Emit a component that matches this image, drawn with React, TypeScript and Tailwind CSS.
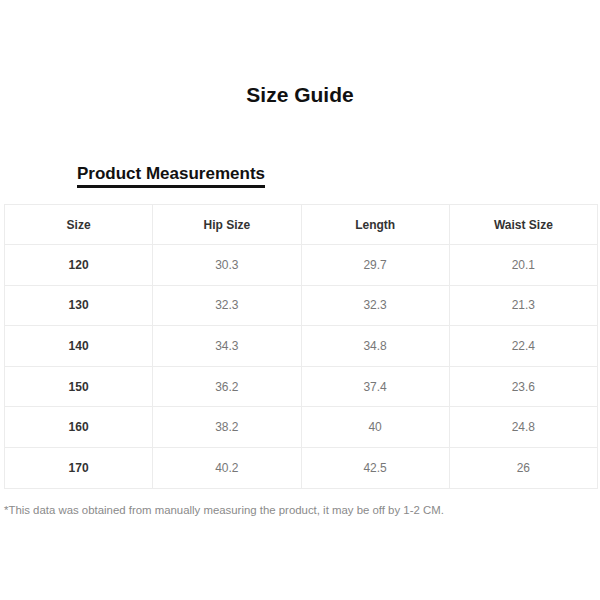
const rows = [
  ['120', '30.3', '29.7', '20.1'],
  ['130', '32.3', '32.3', '21.3'],
  ['140', '34.3', '34.8', '22.4'],
  ['150', '36.2', '37.4', '23.6'],
  ['160', '38.2', '40', '24.8'],
  ['170', '40.2', '42.5', '26'],
];

const headers = ['Size', 'Hip Size', 'Length', 'Waist Size'];

export default function App() {
  return (
    <div className="w-[600px] h-[600px] bg-white font-['Liberation_Sans',Arial,sans-serif] pt-[83px]">
      <h1 className="text-center text-[21px] leading-[24px] font-bold text-[#111]">Size Guide</h1>

      <div className="mt-[55px] pl-[77px] h-[42px]">
        <span className="inline-block text-[17px] leading-[20px] font-bold text-[#111] border-b-[3px] border-[#111] pb-[1px]">
          Product Measurements
        </span>
      </div>

      <div className="px-[4px]">
        <table className="w-[594px] border-collapse table-fixed">
          <thead>
            <tr className="h-[40px]">
              {headers.map((h) => (
                <th key={h} className="border border-[#ececec] text-[12px] font-bold text-[#333] text-center">
                  {h}
                </th>
              ))}
            </tr>
          </thead>
          <tbody>
            {rows.map((r) => (
              <tr key={r[0]} className="h-[40.6px]">
                {r.map((v, i) => (
                  <td
                    key={i}
                    className={`border border-[#ececec] text-[12px] text-center ${i === 0 ? 'font-bold text-[#333]' : 'text-[#777]'}`}
                  >
                    {v}
                  </td>
                ))}
              </tr>
            ))}
          </tbody>
        </table>
      </div>

      <p className="mt-[14px] pl-[4px] text-[11.4px] leading-[14px] text-[#8a8a8a]">
        *This data was obtained from manually measuring the product, it may be off by 1-2 CM.
      </p>
    </div>
  );
}
